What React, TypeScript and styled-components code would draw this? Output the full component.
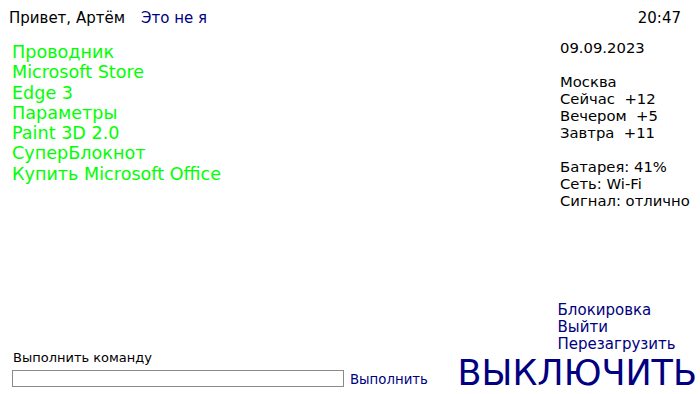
import React from "react";
import styled, { createGlobalStyle } from "styled-components";

const Global = createGlobalStyle`
  html, body { margin: 0; padding: 0; background: #fff; }
  body { font-family: "DejaVu Sans", sans-serif; color: #000; }
`;

const Page = styled.div`
  width: 700px;
  height: 394px;
  box-sizing: border-box;
  display: flex;
  flex-direction: column;
  overflow: hidden;
`;

const Header = styled.div`
  display: flex;
  align-items: baseline;
  padding: 9px 19px 0 9px;
  font-size: 15px;
  line-height: 18px;
`;

const Greeting = styled.span`
  color: #000;
`;

const Link = styled.a<{ $size?: number }>`
  color: #000080;
  text-decoration: none;
  font-size: ${(p) => p.$size ?? 15}px;
  cursor: pointer;
`;

const NotMe = styled(Link)`
  margin-left: 16px;
`;

const Clock = styled.span`
  margin-left: auto;
`;

const Main = styled.div`
  flex: 1;
  display: flex;
  justify-content: space-between;
  padding: 12px 11px 0 12px;
`;

const AppList = styled.div`
  display: flex;
  flex-direction: column;
  padding-top: 3px;
`;

const AppItem = styled.a`
  color: #00ff00;
  font-size: 17.6px;
  line-height: 20.3px;
  text-decoration: none;
`;

const Info = styled.div`
  width: 129px;
  display: flex;
  flex-direction: column;
  gap: 17px;
  font-size: 14.8px;
  line-height: 17px;
`;

const Block = styled.div`
  display: flex;
  flex-direction: column;
  white-space: pre;
`;

const Footer = styled.div`
  display: flex;
  justify-content: space-between;
  align-items: flex-end;
  padding: 0 3px 4px 12px;
`;

const RunBox = styled.div`
  display: flex;
  flex-direction: column;
  padding-bottom: 3px;
`;

const RunLabel = styled.div`
  font-size: 13px;
  line-height: 16px;
  margin-left: 1px;
  margin-bottom: 4px;
`;

const RunRow = styled.div`
  display: flex;
  align-items: center;
  gap: 6px;
`;

const Input = styled.input`
  width: 332px;
  height: 17px;
  box-sizing: border-box;
  border: 1px solid #8a8a8a;
  padding: 0 2px;
  margin: 0;
  font: inherit;
`;

const RunLink = styled(Link)`
  line-height: 15px;
  margin-top: 1px;
`;

const Power = styled.div`
  display: flex;
  flex-direction: column;
  align-items: flex-start;
`;

const PowerLinks = styled.div`
  display: flex;
  flex-direction: column;
  margin-left: 100px;
  margin-bottom: 2px;
  line-height: 17px;
`;

const Shutdown = styled(Link)`
  font-size: 35px;
  line-height: 36px;
  margin-bottom: -1px;
`;

const apps = [
  "Проводник",
  "Microsoft Store",
  "Edge 3",
  "Параметры",
  "Paint 3D 2.0",
  "СуперБлокнот",
  "Купить Microsoft Office",
];

export default function App() {
  return (
    <>
      <Global />
      <Page>
        <Header>
          <Greeting>Привет, Артём</Greeting>
          <NotMe>Это не я</NotMe>
          <Clock>20:47</Clock>
        </Header>
        <Main>
          <AppList>
            {apps.map((a) => (
              <AppItem key={a}>{a}</AppItem>
            ))}
          </AppList>
          <Info>
            <Block>
              <span>09.09.2023</span>
            </Block>
            <Block>
              <span>Москва</span>
              <span>Сейчас  +12</span>
              <span>Вечером  +5</span>
              <span>Завтра  +11</span>
            </Block>
            <Block>
              <span>Батарея: 41%</span>
              <span>Сеть: Wi-Fi</span>
              <span>Сигнал: отлично</span>
            </Block>
          </Info>
        </Main>
        <Footer>
          <RunBox>
            <RunLabel>Выполнить команду</RunLabel>
            <RunRow>
              <Input />
              <RunLink $size={13.3}>Выполнить</RunLink>
            </RunRow>
          </RunBox>
          <Power>
            <PowerLinks>
              <Link>Блокировка</Link>
              <Link>Выйти</Link>
              <Link>Перезагрузить</Link>
            </PowerLinks>
            <Shutdown>ВЫКЛЮЧИТЬ</Shutdown>
          </Power>
        </Footer>
      </Page>
    </>
  );
}
